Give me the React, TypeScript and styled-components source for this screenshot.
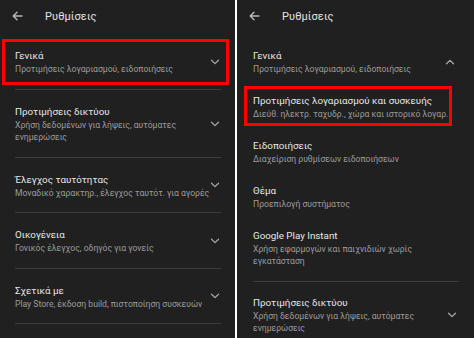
import React from 'react';
import styled, { createGlobalStyle } from 'styled-components';

const Global = createGlobalStyle`
  html, body { margin: 0; padding: 0; background: #202020; }
  body { width: 474px; height: 338px; overflow: hidden; font-family: Roboto, "Noto Sans", sans-serif; -webkit-font-smoothing: antialiased; }
  * { box-sizing: border-box; }
`;

const Screen = styled.div`
  display: flex;
  width: 474px;
  height: 338px;
  background: #ffffff;
`;

const Panel = styled.section<{ $w: number }>`
  width: ${p => p.$w}px;
  height: 338px;
  flex-shrink: 0;
  background: #202020;
  overflow: hidden;
`;

const Split = styled.div`
  width: 2px;
  flex-shrink: 0;
  background: #ffffff;
`;

const Header = styled.header<{ $pad: number }>`
  display: flex;
  align-items: center;
  height: 32px;
  padding-left: ${p => p.$pad}px;
  margin-bottom: 7px;
`;

const Back = styled.span`
  display: flex;
  width: 11px;
  height: 10px;
  margin-right: 22px;
`;

const HeaderTitle = styled.h1`
  margin: 0;
  font-size: 11px;
  font-weight: 400;
  color: #e3e3e3;
  letter-spacing: 0.1px;
`;

const Row = styled.div<{ $pad: string; $hl?: boolean; $margin?: string }>`
  display: flex;
  align-items: center;
  padding: ${p => p.$pad};
  margin: ${p => p.$margin || '0'};
  border: ${p => (p.$hl ? '3px solid #ff0000' : 'none')};
`;

const Texts = styled.div<{ $max?: number }>`
  flex: 1;
  min-width: 0;
  max-width: ${p => (p.$max ? `${p.$max}px` : 'none')};
`;

const ItemTitle = styled.div`
  font-size: 9.8px;
  line-height: 15px;
  color: #e6e6e6;
  white-space: nowrap;
`;

const ItemSub = styled.div`
  font-size: 8.6px;
  line-height: 12px;
  color: #9c9c9c;
`;

const Chevron = styled.span<{ $up?: boolean }>`
  display: flex;
  width: 10px;
  height: 6px;
  margin-left: auto;
  transform: ${p => (p.$up ? 'rotate(180deg)' : 'none')};
`;

const Divider = styled.div<{ $margin: string }>`
  height: 1px;
  margin: ${p => p.$margin};
  background: #3d3d3d;
`;

const ArrowIcon = () => (
  <svg width="11" height="10" viewBox="0 0 11 10" fill="none" stroke="#b8b8b8" strokeWidth="1.4" strokeLinecap="round" strokeLinejoin="round">
    <path d="M10 5H1.2M5 1.2L1.2 5L5 8.8" />
  </svg>
);

const ChevronIcon = () => (
  <svg width="10" height="6" viewBox="0 0 10 6" fill="none" stroke="#a6a6a6" strokeWidth="1.3" strokeLinecap="round" strokeLinejoin="round">
    <path d="M1.5 1.2L5 4.6L8.5 1.2" />
  </svg>
);

type Item = { title: string; sub: string };

const leftItems: Item[] = [
  { title: 'Προτιμήσεις δικτύου', sub: 'Χρήση δεδομένων για λήψεις, αυτόματες ενημερώσεις' },
  { title: 'Έλεγχος ταυτότητας', sub: 'Μοναδικό χαρακτηρ., έλεγχος ταυτότ. για αγορές' },
  { title: 'Οικογένεια', sub: 'Γονικός έλεγχος, οδηγός για γονείς' },
  { title: 'Σχετικά με', sub: 'Play Store, έκδοση build, πιστοποίηση συσκευών' },
];

const generalSubs: Item[] = [
  { title: 'Ειδοποιήσεις', sub: 'Διαχείριση ρυθμίσεων ειδοποιήσεων' },
  { title: 'Θέμα', sub: 'Προεπιλογή συστήματος' },
];

const Header1 = ({ pad }: { pad: number }) => (
  <Header $pad={pad}>
    <Back><ArrowIcon /></Back>
    <HeaderTitle>Ρυθμίσεις</HeaderTitle>
  </Header>
);

export default function App() {
  return (
    <>
      <Global />
      <Screen>
        <Panel $w={235}>
          <Header1 pad={12} />
          <Row $hl $pad="6px 6px 7px 10px" $margin="0 6px 0 2px">
            <Texts $max={200}>
              <ItemTitle>Γενικά</ItemTitle>
              <ItemSub>Προτιμήσεις λογαριασμού, ειδοποιήσεις</ItemSub>
            </Texts>
            <Chevron><ChevronIcon /></Chevron>
          </Row>
          <Divider $margin="4px 14px 0 15px" />
          {leftItems.map(it => (
            <React.Fragment key={it.title}>
              <Row $pad="14px 15px 13.5px 15px">
                <Texts $max={196}>
                  <ItemTitle>{it.title}</ItemTitle>
                  <ItemSub>{it.sub}</ItemSub>
                </Texts>
                <Chevron><ChevronIcon /></Chevron>
              </Row>
              <Divider $margin="0 14px 0 15px" />
            </React.Fragment>
          ))}
        </Panel>
        <Split />
        <Panel $w={237}>
          <Header1 pad={12} />
          <Row $pad="9px 19px 8.5px 16px">
            <Texts $max={200}>
              <ItemTitle>Γενικά</ItemTitle>
              <ItemSub>Προτιμήσεις λογαριασμού, ειδοποιήσεις</ItemSub>
            </Texts>
            <Chevron $up><ChevronIcon /></Chevron>
          </Row>
          <Row $hl $pad="3.5px 0 3.5px 6px" $margin="2.5px 22px 2.5px 7px">
            <Texts>
              <ItemTitle>Προτιμήσεις λογαριασμού και συσκευής</ItemTitle>
              <ItemSub>Διεύθ. ηλεκτρ. ταχυδρ., χώρα και ιστορικό λογαρ.</ItemSub>
            </Texts>
          </Row>
          {generalSubs.map(it => (
            <Row key={it.title} $pad="9px 16px 9px 16px">
              <Texts $max={205}>
                <ItemTitle>{it.title}</ItemTitle>
                <ItemSub>{it.sub}</ItemSub>
              </Texts>
            </Row>
          ))}
          <Row $pad="9px 16px 14.5px 16px">
            <Texts $max={175}>
              <ItemTitle>Google Play Instant</ItemTitle>
              <ItemSub>Χρήση εφαρμογών και παιχνιδιών χωρίς εγκατάσταση</ItemSub>
            </Texts>
          </Row>
          <Divider $margin="0 15px 0 16px" />
          <Row $pad="13px 17px 10px 16px">
            <Texts $max={180}>
              <ItemTitle>Προτιμήσεις δικτύου</ItemTitle>
              <ItemSub>Χρήση δεδομένων για λήψεις, αυτόματες ενημερώσεις</ItemSub>
            </Texts>
            <Chevron><ChevronIcon /></Chevron>
          </Row>
        </Panel>
      </Screen>
    </>
  );
}
